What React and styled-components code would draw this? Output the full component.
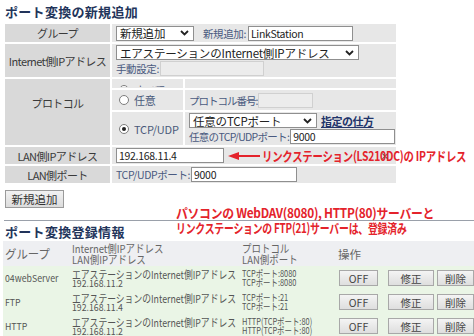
import React from "react";
import styled, { createGlobalStyle } from "styled-components";

const GlobalStyle = createGlobalStyle`
  html, body {
    margin: 0;
    padding: 0;
    background: #fff;
  }
  body {
    font-family: "Noto Sans CJK JP", "Noto Sans", sans-serif;
    color: #333;
  }
`;

const Page = styled.div`
  position: relative;
  width: 474px;
  height: 336px;
  overflow: hidden;
  padding-left: 4px;
  box-sizing: border-box;
`;

const Title = styled.h2`
  margin: 0;
  height: 22px;
  line-height: 24px;
  padding-left: 1px;
  font-size: 13px;
  font-weight: bold;
  color: #22345a;
  letter-spacing: 0.3px;
`;

const FormTable = styled.table`
  width: 395px;
  border-collapse: collapse;
  table-layout: fixed;
  font-size: 11px;
  margin-left: -1px;

  td {
    border: 2px solid #fff;
    padding: 0;
  }
`;

const Row = styled.tr`
  height: ${(p) => p.$h}px;
`;

const Label = styled.td`
  background: #d9d9d9;
  text-align: center;
  vertical-align: ${(p) => (p.$top ? "top" : "middle")};
  padding-top: ${(p) => (p.$top ? "16px" : "0")} !important;
  font-size: 11px;
  color: #3a3a3a;
  letter-spacing: -0.6px;
  white-space: nowrap;
`;

const Value = styled.td`
  background: #e7e7e7;
  padding: 0 0 0 4px !important;
  vertical-align: middle;
`;

const Line = styled.div`
  display: flex;
  align-items: center;
  gap: ${(p) => p.$gap || 4}px;
  height: ${(p) => p.$h || 16}px;
  color: #4a5a7a;
  white-space: nowrap;
`;

const Hint = styled.span`
  color: #4a5a80;
  font-size: 10.5px;
  letter-spacing: ${(p) => p.$ls || -0.4}px;
`;

const SelectBox = styled.div`
  width: ${(p) => p.$w}px;
  height: 15px;
  box-sizing: border-box;
  background: #fff;
  border: 1px solid #8f8f8f;
  display: flex;
  align-items: center;
  justify-content: space-between;
  padding: 0 4px 0 3px;
  font-size: 11.5px;
  color: #222;
  letter-spacing: -0.2px;
  white-space: nowrap;
`;

const Field = styled.input`
  width: ${(p) => p.$w}px;
  height: 15px;
  box-sizing: border-box;
  border: 1px solid ${(p) => (p.disabled ? "#d0d0d0" : "#8f8f8f")};
  background: ${(p) => (p.disabled ? "#ececec" : "#fff")};
  padding: 0 2px;
  font-family: "Noto Sans CJK JP", sans-serif;
  font-size: 10.5px;
  letter-spacing: -0.3px;
  color: #222;
  outline: none;
`;

const FieldWrap = styled.div`
  position: relative;
  display: flex;
  align-items: center;
`;

const ClearMark = styled.span`
  position: absolute;
  right: 6px;
  top: 0;
  font-size: 10px;
  line-height: 15px;
  color: #222;
`;

const RadioCell = styled.td`
  background: #e7e7e7;
  padding: 0 0 0 7px !important;
  vertical-align: middle;
`;

const Clip = styled.div`
  height: 7px;
  overflow: hidden;
`;

const RadioLine = styled.div`
  display: flex;
  align-items: center;
  gap: 5px;
  font-size: 11px;
  color: #4a5a7a;
  letter-spacing: -0.2px;
  padding-top: ${(p) => p.$pt || 0}px;
`;

const Radio = styled.span`
  width: 10px;
  height: 10px;
  border-radius: 50%;
  border: 1px solid #7d7d7d;
  background: #fff;
  box-sizing: border-box;
  display: flex;
  align-items: center;
  justify-content: center;

  &::after {
    content: "";
    width: 4px;
    height: 4px;
    border-radius: 50%;
    background: ${(p) => (p.$on ? "#222" : "transparent")};
  }
`;

const HowLink = styled.a`
  color: #22346a;
  font-size: 11px;
  font-weight: bold;
  letter-spacing: -0.5px;
  text-decoration: underline;
  margin-left: 1px;
`;

const AddButton = styled.button`
  margin-top: 4px;
  margin-left: 1px;
  width: 59px;
  height: 18px;
  padding: 0;
  border: 1px solid #9a9a9a;
  background: linear-gradient(#f2f2f2, #dcdcdc);
  font-family: "Noto Sans CJK JP", sans-serif;
  font-size: 11.5px;
  color: #333;
`;

const Divider = styled.div`
  margin-top: 11px;
  height: 1px;
  background: #9aa0aa;
  margin-right: -4px;
`;

const SectionTitle = styled(Title)`
  height: 20px;
  line-height: 22px;
`;

const ListTable = styled.table`
  width: 471px;
  margin-left: -1px;
  border-collapse: collapse;
  table-layout: fixed;

  td {
    padding: 0 0 0 2px;
    vertical-align: middle;
    overflow: visible;
  }
`;

const HeadRow = styled.tr`
  height: 25px;
  background: #eeeff2;
  color: #666;
`;

const DataRow = styled.tr`
  height: 24px;
  background: #eaf5e6;
  color: #555;
`;

const Squeeze = styled.div`
  font-size: ${(p) => p.$s || 11}px;
  line-height: ${(p) => p.$lh || 10}px;
  white-space: nowrap;
  transform: scaleX(${(p) => p.$sx || 1});
  transform-origin: left center;
`;

const Actions = styled.div`
  display: flex;
  align-items: center;
`;

const ActionButton = styled.button`
  width: ${(p) => p.$w}px;
  height: 16px;
  margin-left: ${(p) => p.$ml}px;
  padding: 0;
  border: 1px solid #a8a8a8;
  background: linear-gradient(#f4f4f4, #dedede);
  font-family: "Noto Sans CJK JP", sans-serif;
  font-size: 10.5px;
  color: #444;
`;

const Note = styled.div`
  position: absolute;
  left: ${(p) => p.$x}px;
  top: ${(p) => p.$y}px;
  width: ${(p) => p.$w}px;
  display: flex;
  align-items: center;
  color: #e4232b;
  font-weight: bold;
  white-space: nowrap;

  svg {
    flex-shrink: 0;
  }
`;

const NoteText = styled.div`
  font-size: 13px;
  line-height: 15px;
  letter-spacing: -0.3px;
  transform: scaleX(${(p) => p.$sx});
  transform-origin: left center;
`;

function Chevron() {
  return (
    <svg width="9" height="6" viewBox="0 0 9 6">
      <polyline points="1,1 4.5,4.5 8,1" fill="none" stroke="#222" strokeWidth="1.8" />
    </svg>
  );
}

function Arrow() {
  return (
    <svg width="32" height="10" viewBox="0 0 32 10">
      <polygon points="0,5 11,1 11,9" fill="#e4232b" />
      <rect x="9" y="4" width="23" height="2" fill="#e4232b" />
    </svg>
  );
}

const rows = [
  { group: "04webServer", ip: "192.168.11.2", port: "TCPポート:8080" },
  { group: "FTP", ip: "192.168.11.4", port: "TCPポート:21" },
  { group: "HTTP", ip: "192.168.11.2", port: "HTTP(TCPポート:80)" },
];

export default function App() {
  return (
    <Page>
      <GlobalStyle />
      <Title>ポート変換の新規追加</Title>
      <FormTable>
        <colgroup>
          <col style={{ width: 107 }} />
          <col style={{ width: 73 }} />
          <col />
        </colgroup>
        <tbody>
          <Row $h={20}>
            <Label>グループ</Label>
            <Value colSpan={2}>
              <Line $gap={9}>
                <SelectBox $w={78}>
                  新規追加
                  <Chevron />
                </SelectBox>
                <Line $gap={2}>
                  <Hint>新規追加:</Hint>
                  <Field $w={105} defaultValue="LinkStation" />
                </Line>
              </Line>
            </Value>
          </Row>
          <Row $h={35}>
            <Label>Internet側IPアドレス</Label>
            <Value colSpan={2}>
              <Line>
                <SelectBox $w={243}>
                  エアステーションのInternet側IPアドレス
                  <Chevron />
                </SelectBox>
              </Line>
              <Line $gap={1}>
                <Hint>手動設定:</Hint>
                <Field $w={104} disabled />
              </Line>
            </Value>
          </Row>
          <Row $h={11}>
            <Label rowSpan={3} $top>
              プロトコル
            </Label>
            <RadioCell>
              <Clip>
                <RadioLine $pt={2}>
                  <Radio />
                  すべて
                </RadioLine>
              </Clip>
            </RadioCell>
            <Value />
          </Row>
          <Row $h={22}>
            <RadioCell>
              <RadioLine>
                <Radio />
                任意
              </RadioLine>
            </RadioCell>
            <Value>
              <Line $gap={1}>
                <Hint $ls={-1}>プロトコル番号:</Hint>
                <Field $w={55} disabled />
              </Line>
            </Value>
          </Row>
          <Row $h={35}>
            <RadioCell>
              <RadioLine>
                <Radio $on />
                TCP/UDP
              </RadioLine>
            </RadioCell>
            <Value>
              <Line $gap={3}>
                <SelectBox $w={128}>
                  任意のTCPポート
                  <Chevron />
                </SelectBox>
                <HowLink href="#">指定の仕方</HowLink>
              </Line>
              <Line $gap={1}>
                <Hint $ls={-0.7}>任意のTCP/UDPポート:</Hint>
                <Field $w={105} defaultValue="9000" />
              </Line>
            </Value>
          </Row>
          <Row $h={19}>
            <Label>LAN側IPアドレス</Label>
            <Value colSpan={2}>
              <FieldWrap>
                <Field $w={108} defaultValue="192.168.11.4" />
                <ClearMark>×</ClearMark>
              </FieldWrap>
            </Value>
          </Row>
          <Row $h={19}>
            <Label>LAN側ポート</Label>
            <Value colSpan={2}>
              <Line $gap={1}>
                <Hint>TCP/UDPポート:</Hint>
                <Field $w={106} defaultValue="9000" />
              </Line>
            </Value>
          </Row>
        </tbody>
      </FormTable>

      <AddButton>新規追加</AddButton>
      <Divider />
      <SectionTitle>ポート変換登録情報</SectionTitle>

      <ListTable>
        <colgroup>
          <col style={{ width: 67 }} />
          <col style={{ width: 170 }} />
          <col style={{ width: 96 }} />
          <col />
        </colgroup>
        <tbody>
          <HeadRow>
            <td>
              <Squeeze $s={12} $lh={14} $sx={0.95}>
                グループ
              </Squeeze>
            </td>
            <td>
              <Squeeze $lh={11} $sx={0.86}>
                Internet側IPアドレス
              </Squeeze>
              <Squeeze $lh={11} $sx={0.86}>
                LAN側IPアドレス
              </Squeeze>
            </td>
            <td>
              <Squeeze $lh={11} $sx={0.86}>
                プロトコル
              </Squeeze>
              <Squeeze $lh={11} $sx={0.86}>
                LAN側ポート
              </Squeeze>
            </td>
            <td>
              <Squeeze $s={11.5} $lh={14}>
                操作
              </Squeeze>
            </td>
          </HeadRow>
          {rows.map((r) => (
            <DataRow key={r.group}>
              <td>
                <Squeeze $s={9.5} $lh={12} $sx={0.92}>
                  {r.group}
                </Squeeze>
              </td>
              <td>
                <Squeeze $s={11} $lh={10} $sx={0.8}>
                  エアステーションのInternet側IPアドレス
                </Squeeze>
                <Squeeze $s={9.5} $lh={9} $sx={0.92}>
                  {r.ip}
                </Squeeze>
              </td>
              <td>
                <Squeeze $s={9.5} $lh={9} $sx={0.78}>
                  {r.port}
                </Squeeze>
                <Squeeze $s={9.5} $lh={9} $sx={0.78}>
                  {r.port}
                </Squeeze>
              </td>
              <td>
                <Actions>
                  <ActionButton $w={39} $ml={1}>
                    OFF
                  </ActionButton>
                  <ActionButton $w={46} $ml={10}>
                    修正
                  </ActionButton>
                  <ActionButton $w={37} $ml={3}>
                    削除
                  </ActionButton>
                </Actions>
              </td>
            </DataRow>
          ))}
        </tbody>
      </ListTable>

      <Note $x={228} $y={148} $w={246}>
        <Arrow />
        <NoteText $sx={0.8} style={{ marginLeft: 2 }}>
          リンクステーション(LS210DC)の IPアドレス
        </NoteText>
      </Note>
      <Note $x={176} $y={205} $w={298}>
        <div>
          <NoteText $sx={0.91}>パソコンの WebDAV(8080), HTTP(80)サーバーと</NoteText>
          <NoteText $sx={0.76}>リンクステーションの FTP(21)サーバーは、登録済み</NoteText>
        </div>
      </Note>
    </Page>
  );
}
